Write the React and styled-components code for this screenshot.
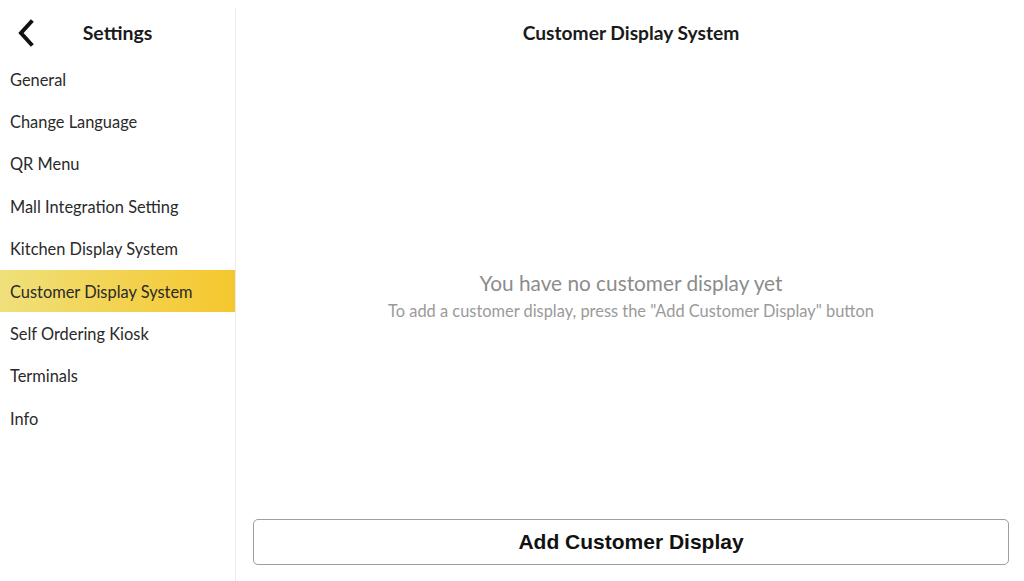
import styled, { createGlobalStyle } from 'styled-components';

const GlobalStyle = createGlobalStyle`
  html, body {
    margin: 0;
    padding: 0;
    background: #fff;
  }
  body {
    font-family: Lato, "Open Sans", sans-serif;
    color: #222;
  }
`;

const Page = styled.div`
  display: flex;
  width: 1024px;
  height: 581px;
  overflow: hidden;
`;

const Sidebar = styled.aside`
  width: 235px;
  flex-shrink: 0;
  display: flex;
  flex-direction: column;
`;

const SideHeader = styled.header`
  height: 64px;
  display: flex;
  align-items: center;
  position: relative;
  justify-content: center;
`;

const BackButton = styled.button`
  position: absolute;
  left: 12px;
  top: 18px;
  border: none;
  background: none;
  padding: 0;
  width: 28px;
  height: 30px;
  display: flex;
  align-items: center;
  justify-content: center;
  cursor: pointer;
`;

const SideTitle = styled.h1`
  margin: 0;
  font-size: 19.5px;
  font-weight: 700;
  color: #1a1a1a;
`;

const Menu = styled.nav`
  display: flex;
  flex-direction: column;
  margin-top: -6px;
`;

const MenuItem = styled.div`
  height: 42.4px;
  display: flex;
  align-items: center;
  padding-left: 10px;
  font-size: 16.4px;
  color: #2a2a2a;
  background: ${({ $active }) =>
    $active ? 'linear-gradient(90deg, #efe07c 0%, #f3d455 45%, #f5c72e 100%)' : 'transparent'};
`;

const Divider = styled.div`
  width: 1px;
  margin-top: 8px;
  background: #ececec;
  flex-shrink: 0;
`;

const Main = styled.main`
  flex: 1;
  display: flex;
  flex-direction: column;
  padding: 0 15px 16px 17px;
`;

const MainTitle = styled.h2`
  margin: 0;
  height: 64px;
  display: flex;
  align-items: center;
  justify-content: center;
  font-size: 19.2px;
  font-weight: 700;
  color: #1a1a1a;
`;

const Empty = styled.div`
  flex: 1;
  display: flex;
  flex-direction: column;
  align-items: center;
  justify-content: center;
  text-align: center;
  padding-top: 6px;
`;

const EmptyTitle = styled.p`
  margin: 0;
  font-size: 20.8px;
  color: #8c8c8c;
`;

const EmptyText = styled.p`
  margin: 6px 0 0;
  font-size: 16.4px;
  color: #9a9a9a;
`;

const AddButton = styled.button`
  height: 46px;
  width: 100%;
  border: 1px solid #9e9e9e;
  border-radius: 5px;
  background: #fff;
  font-family: "Liberation Sans", Arial, sans-serif;
  font-size: 21px;
  font-weight: 700;
  color: #111;
  cursor: pointer;
`;

const items = [
  'General',
  'Change Language',
  'QR Menu',
  'Mall Integration Setting',
  'Kitchen Display System',
  'Customer Display System',
  'Self Ordering Kiosk',
  'Terminals',
  'Info',
];

const ChevronLeft = () => (
  <svg width="22" height="28" viewBox="0 0 22 28" fill="none">
    <path d="M16 3 L6 14 L16 25" stroke="#111" strokeWidth="4" strokeLinecap="square" />
  </svg>
);

export default function App() {
  return (
    <Page>
      <GlobalStyle />
      <Sidebar>
        <SideHeader>
          <BackButton aria-label="Back">
            <ChevronLeft />
          </BackButton>
          <SideTitle>Settings</SideTitle>
        </SideHeader>
        <Menu>
          {items.map((item) => (
            <MenuItem key={item} $active={item === 'Customer Display System'}>
              {item}
            </MenuItem>
          ))}
        </Menu>
      </Sidebar>
      <Divider />
      <Main>
        <MainTitle>Customer Display System</MainTitle>
        <Empty>
          <EmptyTitle>You have no customer display yet</EmptyTitle>
          <EmptyText>To add a customer display, press the "Add Customer Display" button</EmptyText>
        </Empty>
        <AddButton>Add Customer Display</AddButton>
      </Main>
    </Page>
  );
}
